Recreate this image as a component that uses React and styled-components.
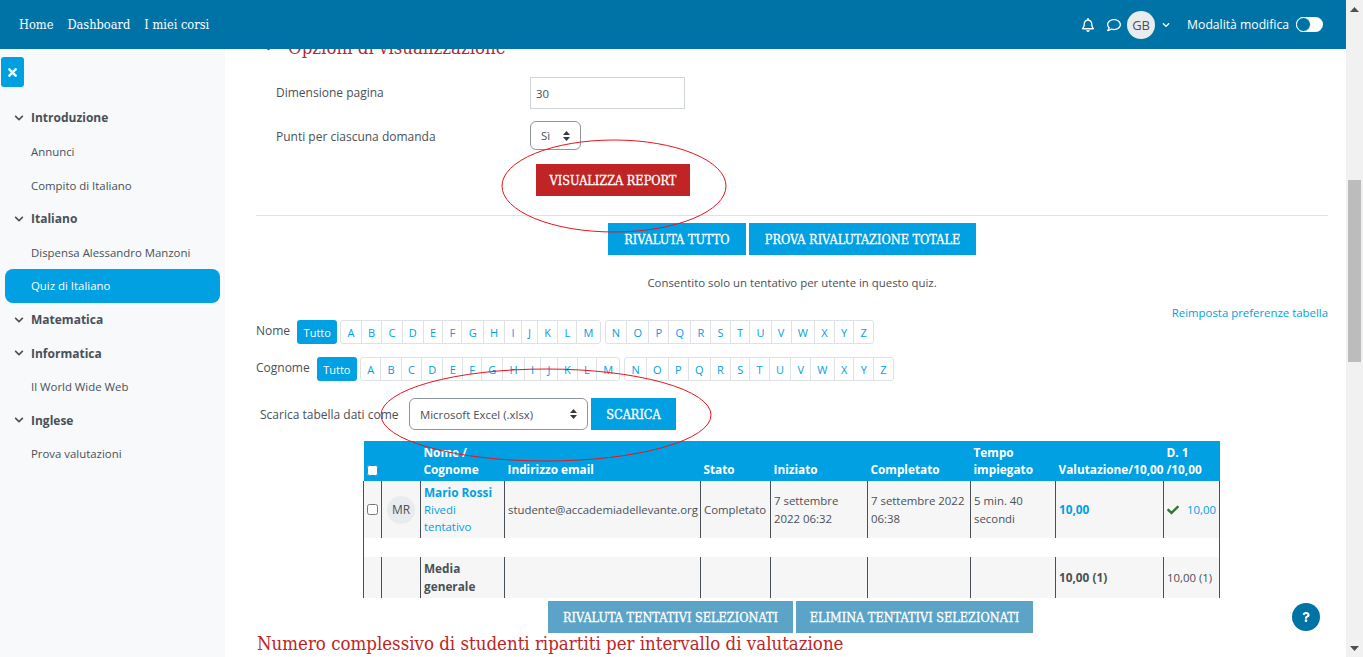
import React from 'react';
import styled, { createGlobalStyle } from 'styled-components';
import { FaTimes, FaCheck, FaChevronDown, FaRegBell, FaRegComment, FaQuestion } from 'react-icons/fa';

const blue = '#00a0e3';
const navy = '#0073a6';
const red = '#c12424';
const slab = '"DejaVu Serif Condensed", "DejaVu Serif", serif';
const line = '#dee2e6';

const GlobalStyle = createGlobalStyle`
    html, body {
        margin: 0;
        height: 100%;
        overflow: hidden;
    }
    body {
        font-family: "Open Sans", "Noto Sans", sans-serif;
        font-size: 11.4px;
        color: #495057;
        background: #fff;
    }
`;

const Page = styled.div`
    position: relative;
    display: flex;
    height: 657px;
    overflow: hidden;
`;

const Column = styled.div`
    flex: 1;
    min-width: 0;
    display: flex;
    flex-direction: column;
`;

const TopBar = styled.header`
    flex: none;
    height: 49px;
    background: ${navy};
    display: flex;
    align-items: center;
    padding: 0 23px 0 19px;
    color: #fff;
    position: relative;
    z-index: 2;
`;

const NavLink = styled.a`
    font-family: ${slab};
    font-size: 12.7px;
    margin-right: 14px;
`;

const TopRight = styled.div`
    margin-left: auto;
    display: flex;
    align-items: center;
    font-size: 12.2px;
`;

const TopIcon = styled.span`
    display: flex;
    font-size: ${(p) => p.$size || 14}px;
    margin: 0 ${(p) => p.$gap}px 0 ${(p) => p.$before || 0}px;
`;

const Avatar = styled.span`
    display: flex;
    align-items: center;
    justify-content: center;
    width: 28px;
    height: 28px;
    border-radius: 50%;
    background: #e9ecef;
    color: #495057;
    font-size: 13px;
    flex: none;
`;

const Toggle = styled.span`
    width: 27px;
    height: 15px;
    border-radius: 8px;
    background: #fff;
    margin-left: 7px;
    display: flex;
    align-items: center;

    &::before {
        content: '';
        width: 13px;
        height: 13px;
        border-radius: 50%;
        background: ${navy};
        border: 1px solid #fff;
    }
`;

const Body = styled.div`
    flex: 1;
    min-height: 0;
    display: flex;
`;

const Sidebar = styled.aside`
    flex: none;
    width: 225px;
    background: #f8f9fa;
    padding-top: 8px;
`;

const CloseButton = styled.div`
    width: 23px;
    height: 30px;
    margin: 0 0 14.2px 1px;
    border-radius: 3px;
    background: ${blue};
    color: #fff;
    display: flex;
    align-items: center;
    justify-content: center;
    font-size: 13px;
`;

const SideItem = styled.div`
    height: 33.6px;
    display: flex;
    align-items: center;
    margin: 0 5px;
    padding-left: 26px;
    border-radius: ${(p) => (p.$active ? '8px' : '0')};
    background: ${(p) => (p.$active ? blue : 'transparent')};
    color: ${(p) => (p.$active ? '#fff' : '#495057')};
    font-weight: ${(p) => (p.$section ? 700 : 400)};
    font-size: ${(p) => (p.$section ? 12 : 11.4)}px;
    position: relative;

    svg {
        position: absolute;
        left: 9px;
        font-size: 10px;
    }
`;

const Main = styled.main`
    flex: 1;
    min-width: 0;
    overflow: hidden;
    padding: 0 18px 0 31px;
`;

const SectionTitle = styled.h3`
    margin: -14px 0 0;
    height: 24px;
    font-family: ${slab};
    font-weight: 400;
    font-size: 18.5px;
    color: ${red};
    display: flex;
    align-items: center;
    gap: 14px;

    svg {
        font-size: 11px;
        margin-left: 7px;
    }
`;

const FormRow = styled.div`
    display: flex;
    align-items: flex-start;
    margin-top: ${(p) => p.$top}px;
`;

const FormLabel = styled.label`
    width: 274px;
    padding-left: 20px;
    box-sizing: border-box;
    font-size: 12px;
    margin-top: ${(p) => p.$shift || 0}px;
`;

const TextInput = styled.input`
    width: 155px;
    height: 32px;
    box-sizing: border-box;
    border: 1px solid #ced4da;
    padding: 0 5px;
    font: inherit;
    color: #495057;
`;

const SelectBox = styled.div`
    box-sizing: border-box;
    display: flex;
    align-items: center;
    justify-content: space-between;
    width: ${(p) => p.$width}px;
    height: ${(p) => p.$height}px;
    padding: 0 10px;
    border: 1px solid #8f959e;
    border-radius: 6px;
    color: #495057;
`;

const Button = styled.button`
    border: 0;
    height: 32px;
    width: ${(p) => p.$width}px;
    padding: 0;
    margin: ${(p) => p.$margin || 0};
    background: ${(p) => p.$bg || blue};
    color: #fff;
    font-family: ${slab};
    font-size: 12.6px;
    -webkit-text-stroke: 0.3px #fff;
    white-space: nowrap;
    flex: none;
`;

const Rule = styled.hr`
    border: 0;
    border-top: 1px solid ${line};
    margin: 19px 0 7px;
`;

const ButtonRow = styled.div`
    display: flex;
    justify-content: center;
    gap: 3px;
    margin-left: ${(p) => p.$left || 0}px;
`;

const Notice = styled.p`
    margin: 20px 0 0;
    text-align: center;
`;

const ResetLink = styled.a`
    display: block;
    text-align: right;
    color: ${blue};
    margin-top: 14px;
    line-height: 17px;
`;

const Initials = styled.div`
    display: flex;
    align-items: center;
    margin-top: ${(p) => p.$top}px;
`;

const InitialLabel = styled.span`
    font-size: 12px;
    margin-right: 7px;
    position: relative;
    top: -2px;
`;

const Bar = styled.div`
    display: flex;
    margin-right: 4px;
`;

const Letter = styled.a`
    box-sizing: border-box;
    height: 24px;
    display: flex;
    align-items: center;
    padding: 0 6.2px;
    margin-left: -1px;
    border: 1px solid ${line};
    color: ${blue};
    font-size: 11px;

    &:first-child {
        margin-left: 0;
        border-radius: 3px 0 0 3px;
    }
    &:last-child {
        border-radius: 0 3px 3px 0;
    }
`;

const AllLetter = styled.a`
    box-sizing: border-box;
    height: 24px;
    display: flex;
    align-items: center;
    padding: 0 6.5px;
    margin-right: 3px;
    border-radius: 3px;
    background: ${blue};
    color: #fff;
    font-size: 11px;
`;

const Download = styled.div`
    display: flex;
    align-items: center;
    margin: 17px 0 11px 4px;
`;

const DownloadLabel = styled.span`
    width: 149px;
    flex: none;
    font-size: 12px;
`;

const Table = styled.table`
    width: 856px;
    margin-left: 107px;
    border-collapse: collapse;
    table-layout: fixed;
    line-height: 17.3px;
`;

const HeadCell = styled.th`
    background: ${blue};
    color: #fff;
    font-weight: 700;
    font-size: 11.8px;
    text-align: left;
    vertical-align: bottom;
    padding: 3px 3px 2px;
    height: 34px;
    white-space: ${(p) => (p.$nowrap ? 'nowrap' : 'normal')};
`;

const Cell = styled.td`
    background: #f6f6f6;
    border-left: 1px solid #495057;
    border-right: 1px solid #495057;
    padding: 3px;
    vertical-align: middle;
    font-weight: ${(p) => (p.$bold ? 700 : 400)};
    font-size: ${(p) => (p.$bold ? 11.8 : 11.4)}px;
    color: ${(p) => (p.$bold === 'link' ? blue : '#495057')};
    white-space: ${(p) => (p.$nowrap ? 'nowrap' : 'normal')};
`;

const Spacer = styled.td`
    height: 19px;
    padding: 0;
    border-left: 1px solid #495057;
    border-right: 1px solid #495057;
`;

const TableLink = styled.a`
    color: ${blue};
    display: block;
    font-weight: ${(p) => (p.$bold ? 700 : 400)};
    font-size: ${(p) => (p.$bold ? 11.8 : 11.4)}px;
`;

const Check = styled.input`
    margin: 0;
    width: 11px;
    height: 11px;
    display: block;
`;

const HeadCheck = styled(Check)`
    margin-bottom: 3px;
`;

const RowAvatar = styled(Avatar)`
    margin: 0 auto;
    font-size: 12px;
`;

const GradeCell = styled.span`
    display: flex;
    align-items: center;
    justify-content: space-between;
    color: ${blue};

    svg {
        color: #2d7a36;
        font-size: 12px;
    }
`;

const BottomTitle = styled.h2`
    margin: 0 0 0 1px;
    font-family: ${slab};
    font-weight: 400;
    font-size: 18.5px;
    line-height: 22px;
    color: ${red};
    white-space: nowrap;
`;

const ScrollTrack = styled.div`
    flex: none;
    width: 17px;
    background: #f1f1f1;
    position: relative;
    z-index: 3;
`;

const ScrollThumb = styled.div`
    position: absolute;
    left: 2px;
    top: ${(p) => p.$top}px;
    width: 13px;
    height: ${(p) => p.$height}px;
    background: #bcbcbc;
`;

const ScrollArrow = styled.svg`
    position: absolute;
    left: 4px;
    width: 9px;
    height: 5px;
    ${(p) => (p.$down ? 'bottom: 6px;' : 'top: 7px;')}
`;

const HelpButton = styled.div`
    position: absolute;
    left: 1292px;
    top: 603px;
    width: 28px;
    height: 28px;
    border-radius: 50%;
    background: ${navy};
    color: #fff;
    display: flex;
    align-items: center;
    justify-content: center;
    font-size: 10px;
`;

const Annotation = styled.svg`
    position: absolute;
    left: 0;
    top: 0;
    pointer-events: none;
    z-index: 1;
`;

const UpDown = () => (
    <svg width="7" height="10" viewBox="0 0 7 10">
        <path d="M3.5 0 7 4H0zM3.5 10 0 6h7z" fill="#343a40" />
    </svg>
);

const sideItems = [
    { label: 'Introduzione', section: true },
    { label: 'Annunci' },
    { label: 'Compito di Italiano' },
    { label: 'Italiano', section: true },
    { label: 'Dispensa Alessandro Manzoni' },
    { label: 'Quiz di Italiano', active: true },
    { label: 'Matematica', section: true },
    { label: 'Informatica', section: true },
    { label: 'Il World Wide Web' },
    { label: 'Inglese', section: true },
    { label: 'Prova valutazioni' },
];

const firstHalf = 'ABCDEFGHIJKLM'.split('');
const secondHalf = 'NOPQRSTUVWXYZ'.split('');
const colWidths = [18, 39, 84, 196, 70, 97, 103, 85, 108, 56];

function InitialsBar({ label, top }) {
    return (
        <Initials $top={top}>
            <InitialLabel>{label}</InitialLabel>
            <AllLetter>Tutto</AllLetter>
            <Bar>
                {firstHalf.map((l) => (
                    <Letter key={l}>{l}</Letter>
                ))}
            </Bar>
            <Bar>
                {secondHalf.map((l) => (
                    <Letter key={l}>{l}</Letter>
                ))}
            </Bar>
        </Initials>
    );
}

function App() {
    return (
        <Page>
            <GlobalStyle />
            <Column>
                <TopBar>
                    <NavLink>Home</NavLink>
                    <NavLink>Dashboard</NavLink>
                    <NavLink>I miei corsi</NavLink>
                    <TopRight>
                        <TopIcon $gap={12}>
                            <FaRegBell />
                        </TopIcon>
                        <TopIcon $gap={6}>
                            <FaRegComment />
                        </TopIcon>
                        <Avatar>GB</Avatar>
                        <TopIcon $gap={17} $size={8} $before={7}>
                            <FaChevronDown />
                        </TopIcon>
                        <span>Modalità modifica</span>
                        <Toggle />
                    </TopRight>
                </TopBar>
                <Body>
                    <Sidebar>
                        <CloseButton>
                            <FaTimes />
                        </CloseButton>
                        {sideItems.map((item) => (
                            <SideItem key={item.label} $section={item.section} $active={item.active}>
                                {item.section && <FaChevronDown />}
                                {item.label}
                            </SideItem>
                        ))}
                    </Sidebar>
                    <Main>
                        <SectionTitle>
                            <FaChevronDown />
                            Opzioni di visualizzazione
                        </SectionTitle>
                        <FormRow $top={18}>
                            <FormLabel $shift={7}>Dimensione pagina</FormLabel>
                            <TextInput defaultValue="30" readOnly />
                        </FormRow>
                        <FormRow $top={12}>
                            <FormLabel $shift={7}>Punti per ciascuna domanda</FormLabel>
                            <SelectBox $width={51} $height={29}>
                                Sì <UpDown />
                            </SelectBox>
                        </FormRow>
                        <FormRow $top={14}>
                            <Button $bg={red} $width={154} $margin="0 0 0 280px">
                                VISUALIZZA REPORT
                            </Button>
                        </FormRow>
                        <Rule />
                        <ButtonRow>
                            <Button $width={138}>RIVALUTA TUTTO</Button>
                            <Button $width={227}>PROVA RIVALUTAZIONE TOTALE</Button>
                        </ButtonRow>
                        <Notice>Consentito solo un tentativo per utente in questo quiz.</Notice>
                        <ResetLink>Reimposta preferenze tabella</ResetLink>
                        <InitialsBar label="Nome" top={-1} />
                        <InitialsBar label="Cognome" top={13} />
                        <Download>
                            <DownloadLabel>Scarica tabella dati come</DownloadLabel>
                            <SelectBox $width={179} $height={32}>
                                Microsoft Excel (.xlsx) <UpDown />
                            </SelectBox>
                            <Button $width={85} $margin="0 0 0 3px">
                                SCARICA
                            </Button>
                        </Download>
                        <Table>
                            <colgroup>
                                {colWidths.map((w, i) => (
                                    <col key={i} width={w} />
                                ))}
                            </colgroup>
                            <thead>
                                <tr>
                                    <HeadCell>
                                        <HeadCheck type="checkbox" />
                                    </HeadCell>
                                    <HeadCell />
                                    <HeadCell>Nome / Cognome</HeadCell>
                                    <HeadCell>Indirizzo email</HeadCell>
                                    <HeadCell>Stato</HeadCell>
                                    <HeadCell>Iniziato</HeadCell>
                                    <HeadCell>Completato</HeadCell>
                                    <HeadCell>Tempo impiegato</HeadCell>
                                    <HeadCell $nowrap>Valutazione/10,00</HeadCell>
                                    <HeadCell>D. 1 /10,00</HeadCell>
                                </tr>
                            </thead>
                            <tbody>
                                <tr>
                                    <Cell>
                                        <Check type="checkbox" />
                                    </Cell>
                                    <Cell>
                                        <RowAvatar>MR</RowAvatar>
                                    </Cell>
                                    <Cell>
                                        <TableLink $bold>Mario Rossi</TableLink>
                                        <TableLink>Rivedi tentativo</TableLink>
                                    </Cell>
                                    <Cell $nowrap>studente@accademiadellevante.org</Cell>
                                    <Cell $nowrap>Completato</Cell>
                                    <Cell>7 settembre 2022 06:32</Cell>
                                    <Cell>7 settembre 2022 06:38</Cell>
                                    <Cell>5 min. 40 secondi</Cell>
                                    <Cell $bold="link">10,00</Cell>
                                    <Cell>
                                        <GradeCell>
                                            <FaCheck />
                                            10,00
                                        </GradeCell>
                                    </Cell>
                                </tr>
                                <tr>
                                    <Spacer colSpan={10} />
                                </tr>
                                <tr>
                                    <Cell />
                                    <Cell />
                                    <Cell $bold>Media generale</Cell>
                                    <Cell />
                                    <Cell />
                                    <Cell />
                                    <Cell />
                                    <Cell />
                                    <Cell $bold>10,00 (1)</Cell>
                                    <Cell $nowrap>10,00 (1)</Cell>
                                </tr>
                            </tbody>
                        </Table>
                        <FormRow $top={3}>
                            <ButtonRow $left={292}>
                                <Button $bg="#5ba4c7" $width={245}>
                                    RIVALUTA TENTATIVI SELEZIONATI
                                </Button>
                                <Button $bg="#5ba4c7" $width={237}>
                                    ELIMINA TENTATIVI SELEZIONATI
                                </Button>
                            </ButtonRow>
                        </FormRow>
                        <BottomTitle>Numero complessivo di studenti ripartiti per intervallo di valutazione</BottomTitle>
                    </Main>
                </Body>
            </Column>
            <ScrollTrack>
                <ScrollArrow viewBox="0 0 9 5">
                    <path d="M4.5 0 9 5H0z" fill="#505050" />
                </ScrollArrow>
                <ScrollThumb $top={180} $height={182} />
                <ScrollArrow $down viewBox="0 0 9 5">
                    <path d="M4.5 5 0 0h9z" fill="#505050" />
                </ScrollArrow>
            </ScrollTrack>
            <HelpButton>
                <FaQuestion />
            </HelpButton>
            <Annotation width="1346" height="657">
                <ellipse cx="614" cy="186" rx="112" ry="46" fill="none" stroke="#e8141c" />
                <ellipse cx="546" cy="415" rx="165" ry="46" fill="none" stroke="#e8141c" />
            </Annotation>
        </Page>
    );
}

export default App;
